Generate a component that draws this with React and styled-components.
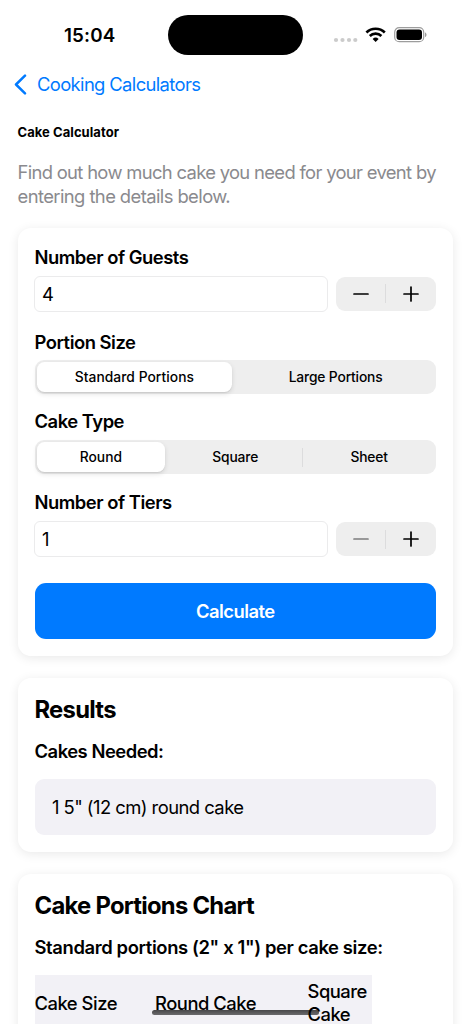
import React, { useState } from 'react';
import styled, { createGlobalStyle } from 'styled-components'

const Colors = {
    blue: "#007aff",
    gray: "#8a8a8e",
    control: "#eeeeee",
    divider: "#dcdcdd",
    panel: "#f2f1f6",
    field: "#ebebec",
}

const GlobalStyle = createGlobalStyle`
    * {
        box-sizing: border-box;
    }

    body {
        margin: 0;
        background: white;
        color: black;
        font-family: Inter, "Liberation Sans", sans-serif;
        font-size: 18.4px;
    }

    h1, h2, h3, p {
        margin: 0;
    }

    button {
        font-family: inherit;
        color: inherit;
        border: none;
        padding: 0;
        background: none;
    }
`

const Screen = styled.div`
    position: relative;
    width: 471px;
    height: 1024px;
    overflow: hidden;
`

const StatusBar = styled.header`
    display: grid;
    grid-template-columns: 168.3px 134.4px 1fr;
    align-items: center;
    height: 70px;
`

const Time = styled.span`
    padding: 1px 0 0 64px;
    font-size: 18.8px;
    font-weight: 600;
    letter-spacing: .15px;
`

const Island = styled.div`
    height: 39.4px;
    border-radius: 20px;
    background: black;
`

const StatusIcons = styled.svg`
    display: block;
    width: 96px;
    height: 18px;
    margin-left: 30.3px;
`

const BackLink = styled.button`
    display: flex;
    align-items: center;
    gap: 10px;
    height: 28px;
    padding-left: 14px;
    color: ${Colors.blue};
    font-size: 18.4px;
    letter-spacing: -.63px;
`

const Main = styled.main`
    padding: 0 18px 0 17.5px;
`

const PageTitle = styled.h1`
    margin-top: 25px;
    font-size: 13px;
    line-height: 18px;
    font-weight: 700;
    letter-spacing: .06px;
`

const Intro = styled.p`
    margin: 20px 0 20px;
    color: ${Colors.gray};
    line-height: 23.5px;
    white-space: nowrap;
`

const IntroLine = styled.span`
    display: block;
    letter-spacing: ${props => props.$spacing};
`

const Card = styled.section`
    margin-bottom: 21.7px;
    padding: 17px;
    border-radius: 13px;
    background: white;
    box-shadow: 0 2px 11px rgba(0, 0, 0, .09);
`

const Label = styled.h3`
    margin-bottom: 6px;
    font-size: 18.4px;
    line-height: 24.5px;
    font-weight: 600;
    letter-spacing: ${props => props.$spacing || "-.48px"};
    white-space: nowrap;
`

const Field = styled.div`
    margin-bottom: ${props => props.$gap};

    & + & ${Label} {
        margin-bottom: 8.2px;
        line-height: 22.3px;
    }
`

const NumberRow = styled.div`
    display: flex;
    align-items: center;
    justify-content: space-between;
`

const Input = styled.input`
    width: 294px;
    height: 36.5px;
    padding: 0 7px;
    margin: 0 0 0 -.5px;
    border: 1px solid ${Colors.field};
    border-radius: 6px;
    font: inherit;
    outline: none;
`

const StepperBox = styled.div`
    display: flex;
    align-items: center;
    width: 100.3px;
    height: 34px;
    border-radius: 9px;
    background: ${Colors.control};
`

const StepButton = styled.button`
    flex: 1;
    height: 100%;
    display: flex;
    align-items: center;
    justify-content: center;
    color: ${props => props.disabled ? "#7c7c7d" : "black"};
`

const Divider = styled.span`
    width: 1px;
    height: 19px;
    background: ${Colors.divider};
`

const Segments = styled.div`
    display: flex;
    align-items: center;
    height: 34px;
    border-radius: 9px;
    background: ${Colors.control};
`

const Segment = styled.button`
    flex: 1;
    height: 30px;
    margin: 0 3px 0 2px;
    border-radius: 7.5px;
    background: ${props => props.$active ? "white" : "transparent"};
    box-shadow: ${props => props.$active ? "0 2px 5px rgba(0, 0, 0, .12), 0 1px 1px rgba(0, 0, 0, .06)" : "none"};
    font-size: 13.8px;
    line-height: 30px;
    font-weight: 500;
    letter-spacing: ${props => props.$active ? ".05px" : "-.15px"};
    text-indent: ${props => props.$active ? "0" : "1px"};
`

const SegmentDivider = styled(Divider)`
    margin: 0 -.5px;
    visibility: ${props => props.$hidden ? "hidden" : "visible"};
`

const Calculate = styled.button`
    display: block;
    width: 100%;
    height: 56px;
    border-radius: 11px;
    background: ${Colors.blue};
    color: white;
    font-size: 18.4px;
    font-weight: 600;
    letter-spacing: -.55px;
`

const CardTitle = styled.h2`
    padding-top: .5px;
    margin-bottom: 13.8px;
    font-size: 23.8px;
    line-height: 30px;
    font-weight: 700;
    letter-spacing: -.72px;
`

const Result = styled.div`
    margin-top: 15.5px;
    padding: 16px 17.5px;
    border-radius: 9px;
    background: ${Colors.panel};
    line-height: 24px;
    letter-spacing: -.54px;
`

const Chart = styled.div`
    display: grid;
    grid-template-columns: 120.5px 152.5px 64px;
    align-items: center;
    width: 337px;
    height: 57px;
    margin-top: 15.5px;
    background: ${Colors.panel};
    font-weight: 550;
    line-height: 23.5px;
    letter-spacing: -.48px;
`

const HomeIndicator = styled.div`
    position: absolute;
    left: 152px;
    bottom: 9px;
    width: 167px;
    height: 5px;
    border-radius: 3px;
    background: linear-gradient(rgba(0, 0, 0, .7), rgba(0, 0, 0, .56));
`

function Minus() {
    return (
        <svg width="16" height="16" viewBox="0 0 16 16" stroke="currentColor" strokeWidth="1.7" strokeLinecap="round">
            <path d="M1 8h14" />
        </svg>
    )
}

function Plus() {
    return (
        <svg width="16" height="16" viewBox="0 0 16 16" stroke="currentColor" strokeWidth="1.7" strokeLinecap="round">
            <path d="M1 8h14M8 1v14" />
        </svg>
    )
}

function NumberField(props) {
    const [value, setValue] = useState(props.initial)

    return (
        <Field $gap={props.last ? "25.5px" : "17.5px"}>
            <Label>{props.label}</Label>
            <NumberRow>
                <Input
                    value={value}
                    onChange={(e) => setValue(Number(e.target.value) || 1)}
                />
                <StepperBox>
                    <StepButton disabled={value <= 1} onClick={() => setValue(value - 1)}>
                        <Minus />
                    </StepButton>
                    <Divider />
                    <StepButton onClick={() => setValue(value + 1)}>
                        <Plus />
                    </StepButton>
                </StepperBox>
            </NumberRow>
        </Field>
    )
}

function SegmentedField(props) {
    const [active, setActive] = useState(0)

    return (
        <Field $gap="16px">
            <Label>{props.label}</Label>
            <Segments>
                {props.options.map((option, i) => (
                    <React.Fragment key={option}>
                        {i > 0 && <SegmentDivider $hidden={i === active || i - 1 === active} />}
                        <Segment $active={i === active} onClick={() => setActive(i)}>
                            {option}
                        </Segment>
                    </React.Fragment>
                ))}
            </Segments>
        </Field>
    )
}

function App() {
    return (
        <Screen>
            <GlobalStyle />
            <StatusBar>
                <Time>15:04</Time>
                <Island />
                <StatusIcons viewBox="0 0 96 18">
                    <g fill="#cbcbcb">
                        <circle cx="3" cy="14" r="2.1" />
                        <circle cx="9.5" cy="14" r="2.1" />
                        <circle cx="16" cy="14" r="2.1" />
                        <circle cx="22.3" cy="14" r="2.1" />
                    </g>
                    <g fill="none" stroke="black" strokeWidth="2.6">
                        <path d="M33.4 6.5a13 13 0 0 1 18.4 0" />
                        <path d="M36.8 10a8.2 8.2 0 0 1 11.6 0" />
                    </g>
                    <path d="M42.6 15.9l-3-3a4.3 4.3 0 0 1 6 0z" fill="black" />
                    <rect x="61.7" y="1.7" width="29" height="14" rx="4.5" fill="none" stroke="#9d9d9d" strokeWidth="1.2" />
                    <rect x="63.5" y="3.5" width="25.5" height="10.5" rx="3" fill="black" />
                    <path d="M92 6.5c2 .7 2 3.8 0 4.5z" fill="#9d9d9d" />
                </StatusIcons>
            </StatusBar>
            <BackLink>
                <svg width="13" height="21" viewBox="0 0 13 21" fill="none" stroke="currentColor" strokeWidth="2.5" strokeLinecap="round" strokeLinejoin="round">
                    <path d="M11 1.7L2 10.5l9 8.8" />
                </svg>
                Cooking Calculators
            </BackLink>
            <Main>
                <PageTitle>Cake Calculator</PageTitle>
                <Intro>
                    <IntroLine $spacing="-.67px">Find out how much cake you need for your event by</IntroLine>
                    <IntroLine $spacing="-.58px">entering the details below.</IntroLine>
                </Intro>
                <Card>
                    <NumberField label="Number of Guests" initial={4} />
                    <SegmentedField label="Portion Size" options={["Standard Portions", "Large Portions"]} />
                    <SegmentedField label="Cake Type" options={["Round", "Square", "Sheet"]} />
                    <NumberField label="Number of Tiers" initial={1} last />
                    <Calculate>Calculate</Calculate>
                </Card>
                <Card>
                    <CardTitle>Results</CardTitle>
                    <Label>Cakes Needed:</Label>
                    <Result>1 5" (12 cm) round cake</Result>
                </Card>
                <Card>
                    <CardTitle>Cake Portions Chart</CardTitle>
                    <Label $spacing="-.37px">Standard portions (2" x 1") per cake size:</Label>
                    <Chart>
                        <span>Cake Size</span>
                        <span>Round Cake</span>
                        <span>Square Cake</span>
                    </Chart>
                </Card>
            </Main>
            <HomeIndicator />
        </Screen>
    )
}

export default App;
